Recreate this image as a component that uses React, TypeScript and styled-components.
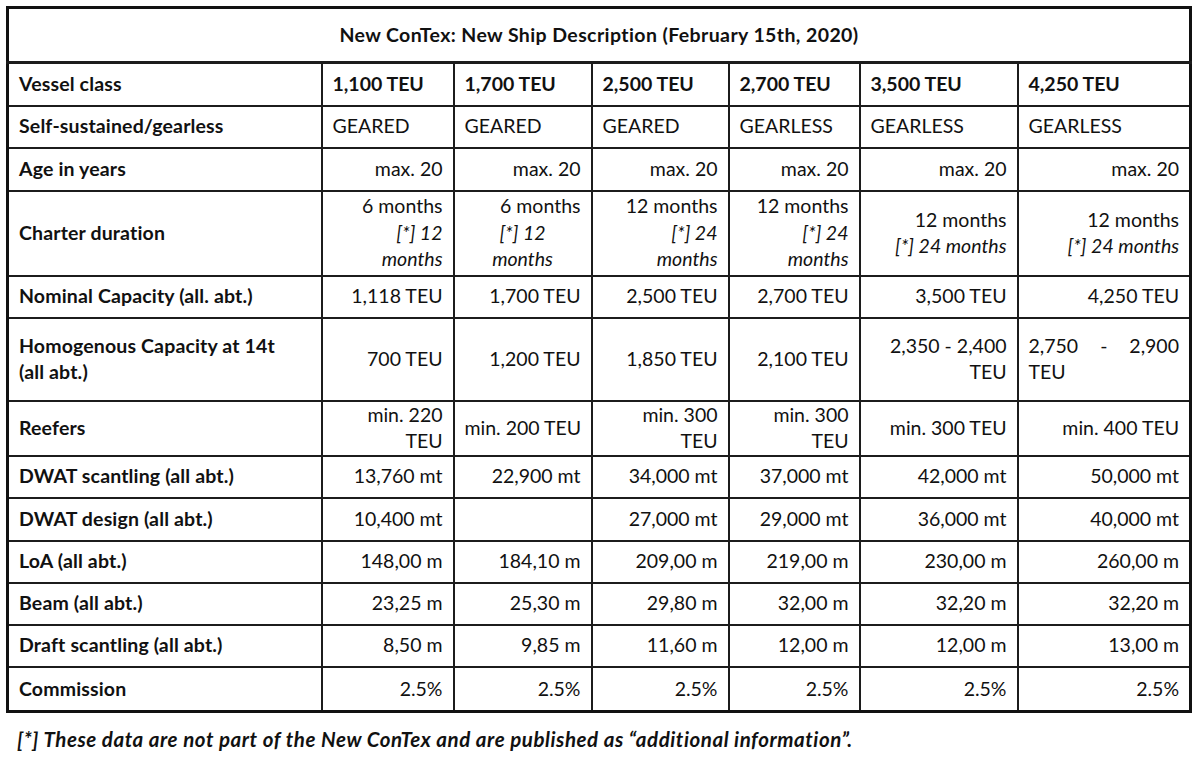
import React from 'react';
import styled, { createGlobalStyle } from 'styled-components';

const GlobalStyle = createGlobalStyle`
  html, body { margin: 0; padding: 0; background: #ffffff; }
  body { font-family: Lato, "Open Sans", "Liberation Sans", sans-serif; color: #111111; }
`;

const Page = styled.div`
  width: 1200px;
  height: 757px;
  box-sizing: border-box;
  padding: 6px 0 0 6px;
  overflow: hidden;
`;

const Table = styled.table`
  width: 1186px;
  border-collapse: collapse;
  table-layout: fixed;
  border: 3px solid #111;
  font-size: 19.5px;
  line-height: 26.5px;
`;

const Col = styled.col<{ $w: number }>`
  width: ${(p) => p.$w}px;
`;

const Row = styled.tr<{ $h: number }>`
  height: ${(p) => p.$h}px;
`;

const Cell = styled.td<{ $align?: string; $bold?: boolean }>`
  border: 2px solid #1c1c1c;
  padding: 0 10px;
  vertical-align: middle;
  text-align: ${(p) => p.$align || 'right'};
  font-weight: ${(p) => (p.$bold ? 700 : 400)};
  white-space: nowrap;
`;

const LabelCell = styled(Cell)`
  font-weight: 700;
  text-align: left;
  padding-left: 10px;
  letter-spacing: 0.15px;
`;

const TitleCell = styled.td`
  border: 2px solid #1c1c1c;
  border-bottom-width: 3px;
  text-align: center;
  font-weight: 700;
  vertical-align: middle;
  letter-spacing: 0.4px;
`;

const Line = styled.div<{ $align?: string; $italic?: boolean }>`
  text-align: ${(p) => p.$align || 'inherit'};
  font-style: ${(p) => (p.$italic ? 'italic' : 'normal')};
`;

const SpreadLine = styled.div`
  display: flex;
  justify-content: space-between;
`;

const Footnote = styled.p`
  margin: 13px 0 0 0;
  padding-left: 11px;
  font-weight: 700;
  font-style: italic;
  font-size: 20.5px;
  letter-spacing: 0.55px;
  line-height: 26px;
`;

type CellDef = { content: React.ReactNode; align?: string; bold?: boolean };
type RowDef = { label: React.ReactNode; h: number; cells: CellDef[] };

const widths = [314, 132, 138, 137, 131, 158, 173];

const simple = (vals: string[], align = 'right', bold = false): CellDef[] =>
  vals.map((v) => ({ content: v, align, bold }));

const rows: RowDef[] = [
  { label: 'Vessel class', h: 43, cells: simple(['1,100 TEU', '1,700 TEU', '2,500 TEU', '2,700 TEU', '3,500 TEU', '4,250 TEU'], 'left', true) },
  { label: 'Self-sustained/gearless', h: 42, cells: simple(['GEARED', 'GEARED', 'GEARED', 'GEARLESS', 'GEARLESS', 'GEARLESS'], 'left') },
  { label: 'Age in years', h: 43, cells: simple(['max. 20', 'max. 20', 'max. 20', 'max. 20', 'max. 20', 'max. 20']) },
  {
    label: 'Charter duration',
    h: 85,
    cells: [
      { content: (<><Line>6 months</Line><Line $italic>[*] 12</Line><Line $italic>months</Line></>) },
      { content: (<><Line>6 months</Line><Line $italic $align="center">[*] 12</Line><Line $italic $align="center">months</Line></>) },
      { content: (<><Line>12 months</Line><Line $italic>[*] 24</Line><Line $italic>months</Line></>) },
      { content: (<><Line>12 months</Line><Line $italic>[*] 24</Line><Line $italic>months</Line></>) },
      { content: (<><Line>12 months</Line><Line $italic>[*] 24 months</Line></>) },
      { content: (<><Line>12 months</Line><Line $italic>[*] 24 months</Line></>) },
    ],
  },
  { label: 'Nominal Capacity (all. abt.)', h: 42, cells: simple(['1,118 TEU', '1,700 TEU', '2,500 TEU', '2,700 TEU', '3,500 TEU', '4,250 TEU']) },
  {
    label: (<><Line>Homogenous Capacity at 14t</Line><Line>(all abt.)</Line></>),
    h: 83,
    cells: [
      { content: '700 TEU' },
      { content: '1,200 TEU' },
      { content: '1,850 TEU' },
      { content: '2,100 TEU' },
      { content: (<><Line>2,350 - 2,400</Line><Line>TEU</Line></>) },
      { content: (<><SpreadLine><span>2,750</span><span>-</span><span>2,900</span></SpreadLine><Line $align="left">TEU</Line></>) },
    ],
  },
  {
    label: 'Reefers',
    h: 55,
    cells: [
      { content: (<><Line>min. 220</Line><Line>TEU</Line></>) },
      { content: 'min. 200 TEU' },
      { content: (<><Line>min. 300</Line><Line>TEU</Line></>) },
      { content: (<><Line>min. 300</Line><Line>TEU</Line></>) },
      { content: 'min. 300 TEU' },
      { content: 'min. 400 TEU' },
    ],
  },
  { label: 'DWAT scantling (all abt.)', h: 42, cells: simple(['13,760 mt', '22,900 mt', '34,000 mt', '37,000 mt', '42,000 mt', '50,000 mt']) },
  { label: 'DWAT design (all abt.)', h: 43, cells: simple(['10,400 mt', '', '27,000 mt', '29,000 mt', '36,000 mt', '40,000 mt']) },
  { label: 'LoA (all abt.)', h: 42, cells: simple(['148,00 m', '184,10 m', '209,00 m', '219,00 m', '230,00 m', '260,00 m']) },
  { label: 'Beam (all abt.)', h: 42, cells: simple(['23,25 m', '25,30 m', '29,80 m', '32,00 m', '32,20 m', '32,20 m']) },
  { label: 'Draft scantling (all abt.)', h: 42, cells: simple(['8,50 m', '9,85 m', '11,60 m', '12,00 m', '12,00 m', '13,00 m']) },
  { label: 'Commission', h: 45, cells: simple(['2.5%', '2.5%', '2.5%', '2.5%', '2.5%', '2.5%']) },
];

export default function App() {
  return (
    <Page>
      <GlobalStyle />
      <Table>
        <colgroup>
          {widths.map((w, i) => (
            <Col key={i} $w={w} />
          ))}
        </colgroup>
        <tbody>
          <Row $h={55}>
            <TitleCell colSpan={7}>New ConTex: New Ship Description (February 15th, 2020)</TitleCell>
          </Row>
          {rows.map((r, i) => (
            <Row key={i} $h={r.h}>
              <LabelCell>{r.label}</LabelCell>
              {r.cells.map((c, j) => (
                <Cell key={j} $align={c.align} $bold={c.bold}>
                  {c.content}
                </Cell>
              ))}
            </Row>
          ))}
        </tbody>
      </Table>
      <Footnote>
        [*] These data are not part of the New ConTex and are published as “additional information”.
      </Footnote>
    </Page>
  );
}
